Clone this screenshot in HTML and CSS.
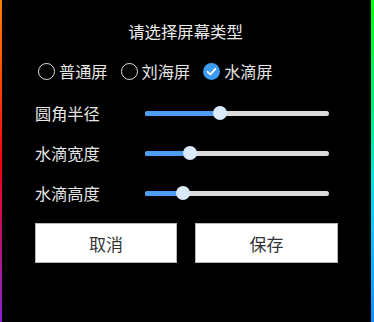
FILE: index.html
```html
<!DOCTYPE html>
<html lang="zh">
<head>
<meta charset="utf-8">
<link rel="stylesheet" href="styles.css">
</head>
<body>
<div class="frame">
  <div class="edge edge-left"></div>
  <main class="dialog">
    <div class="title">请选择屏幕类型</div>
    <div class="radios">
      <label class="radio"><span class="circle"></span><span>普通屏</span></label>
      <label class="radio"><span class="circle"></span><span>刘海屏</span></label>
      <label class="radio"><span class="circle checked"><svg viewBox="0 0 17 17" width="17" height="17"><path d="M4.6 8.8 L7.4 11.4 L12.4 5.8" fill="none" stroke="#fff" stroke-width="1.8" stroke-linecap="round" stroke-linejoin="round"/></svg></span><span>水滴屏</span></label>
    </div>
    <div class="row">
      <span class="label">圆角半径</span>
      <div class="track"><div class="fill" style="width:41%"></div><span class="thumb"></span></div>
    </div>
    <div class="row">
      <span class="label">水滴宽度</span>
      <div class="track"><div class="fill" style="width:24.5%"></div><span class="thumb"></span></div>
    </div>
    <div class="row">
      <span class="label">水滴高度</span>
      <div class="track"><div class="fill" style="width:20.6%"></div><span class="thumb"></span></div>
    </div>
    <div class="buttons">
      <button class="btn">取消</button>
      <button class="btn">保存</button>
    </div>
  </main>
  <div class="edge edge-right"></div>
</div>
</body>
</html>
```
FILE: styles.css
```css
html, body {
  margin: 0;
  padding: 0;
  background: #000;
}
body {
  font-family: "Noto Sans CJK SC", "Noto Sans", sans-serif;
  color: #e6e6e6;
}
.frame {
  display: flex;
  width: 374px;
  height: 322px;
}
.edge {
  flex: none;
  height: 100%;
}
.edge-left {
  width: 2px;
  background: linear-gradient(to bottom, #ff8000 0%, #ff4a00 25%, #f00010 50%, #c0106a 72%, #8a20d8 100%);
}
.edge-right {
  width: 3px;
  background: linear-gradient(to bottom, #00ff10 0%, #00f070 30%, #00e6d8 55%, #10c8ff 70%, #1e8cff 100%);
}
.dialog {
  flex: 1;
  min-width: 0;
  display: flex;
  flex-direction: column;
  padding: 0 33px;
}
.title {
  margin-top: 21px;
  height: 20px;
  line-height: 20px;
  font-size: 16.4px;
  text-align: center;
  color: #ececec;
  padding-right: 2px;
}
.radios {
  margin-top: 20px;
  height: 20px;
  display: flex;
  align-items: center;
  gap: 13px;
  padding-left: 3px;
}
.radio {
  display: flex;
  align-items: center;
  gap: 4px;
  font-size: 16.2px;
  line-height: 20px;
}
.circle {
  box-sizing: border-box;
  width: 17px;
  height: 17px;
  border-radius: 50%;
  border: 1.5px solid #e0e0e0;
  display: flex;
}
.circle.checked {
  border: none;
  background: #3d9cf2;
}
.row {
  height: 40px;
  display: flex;
  align-items: center;
}
.radios + .row {
  margin-top: 12px;
}
.label {
  width: 110px;
  flex: none;
  font-size: 16.2px;
  line-height: 20px;
}
.track {
  position: relative;
  width: 184px;
  height: 5px;
  border-radius: 3px;
  background: #dcdcdc;
  display: flex;
  align-items: center;
}
.fill {
  height: 100%;
  border-radius: 3px;
  background: #4a9ff5;
}
.thumb {
  flex: none;
  width: 14px;
  height: 14px;
  border-radius: 50%;
  background: #dbeafb;
  margin-left: -7px;
}
.buttons {
  margin-top: 10px;
  display: flex;
  gap: 18px;
}
.btn {
  box-sizing: border-box;
  width: 142px;
  height: 40px;
  background: #fff;
  border: 1px solid #b8b8b8;
  font-family: inherit;
  font-size: 17px;
  color: #333;
  padding: 0;
  flex: none;
}
.btn + .btn {
  width: 143px;
}
```
